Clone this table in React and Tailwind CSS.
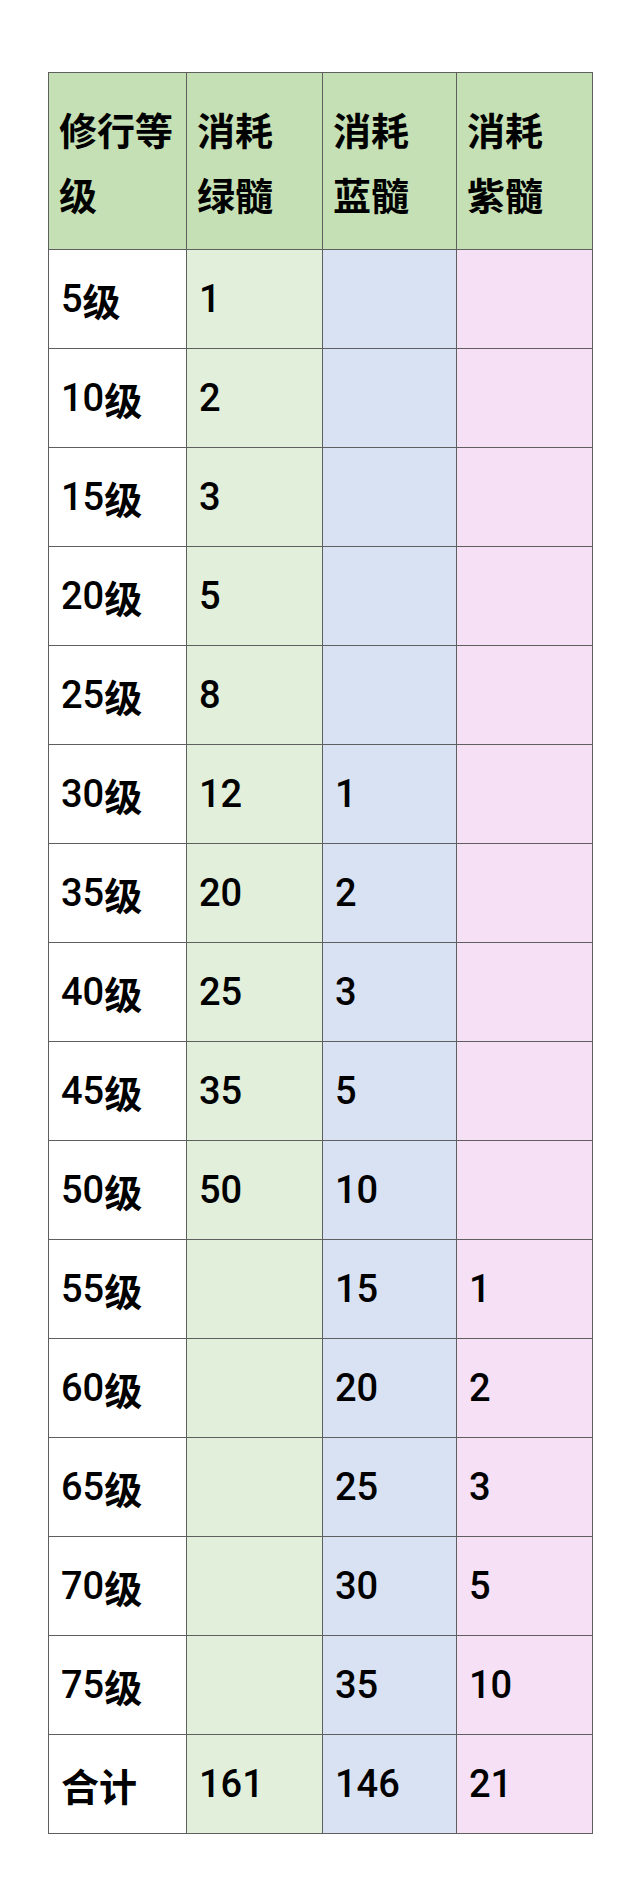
import React from 'react';

const rows = [
  ['5', '1', '', ''],
  ['10', '2', '', ''],
  ['15', '3', '', ''],
  ['20', '5', '', ''],
  ['25', '8', '', ''],
  ['30', '12', '1', ''],
  ['35', '20', '2', ''],
  ['40', '25', '3', ''],
  ['45', '35', '5', ''],
  ['50', '50', '10', ''],
  ['55', '', '15', '1'],
  ['60', '', '20', '2'],
  ['65', '', '25', '3'],
  ['70', '', '30', '5'],
  ['75', '', '35', '10'],
];

const total = ['161', '146', '21'];

const colBg = ['bg-white', 'bg-[#e2efda]', 'bg-[#d9e2f3]', 'bg-[#f5e0f5]'];

const headers = [
  ['修行等', '级'],
  ['消耗', '绿髓'],
  ['消耗', '蓝髓'],
  ['消耗', '紫髓'],
];

// cjk glyphs bold, digits a bit lighter
const cjk = "font-['Noto_Sans_CJK_SC',sans-serif] font-bold";
const num = "font-['Roboto','Liberation_Sans',sans-serif] font-medium";

function Cell({ bg, children }) {
  return (
    <div className={`flex h-[99px] items-center border-b border-r border-[#5f5f5f] pl-[12px] ${bg}`}>
      {children}
    </div>
  );
}

export default function App() {
  return (
    <div className="min-h-screen bg-white pt-[72px] pl-[48px] pb-[48px]">
      <div className="grid w-[545px] grid-cols-[138px_136px_134px_136px] border-l border-t border-[#5f5f5f] text-[38px] text-black">
        {/* header */}
        {headers.map((h, i) => (
          <div
            key={i}
            className={`flex h-[177px] flex-col justify-center border-b border-r border-[#5f5f5f] bg-[#c5e0b4] pl-[10px] leading-[65px] ${cjk}`}
          >
            <span>{h[0]}</span>
            <span>{h[1]}</span>
          </div>
        ))}

        {/* body */}
        {rows.map((r, ri) => (
          <React.Fragment key={ri}>
            <Cell bg={colBg[0]}>
              <span className={num}>{r[0]}</span>
              <span className={cjk}>级</span>
            </Cell>
            {r.slice(1).map((c, ci) => (
              <Cell key={ci} bg={colBg[ci + 1]}>
                <span className={num}>{c}</span>
              </Cell>
            ))}
          </React.Fragment>
        ))}

        {/* total */}
        <Cell bg={colBg[0]}>
          <span className={cjk}>合计</span>
        </Cell>
        {total.map((c, ci) => (
          <Cell key={ci} bg={colBg[ci + 1]}>
            <span className={num}>{c}</span>
          </Cell>
        ))}
      </div>
    </div>
  );
}
